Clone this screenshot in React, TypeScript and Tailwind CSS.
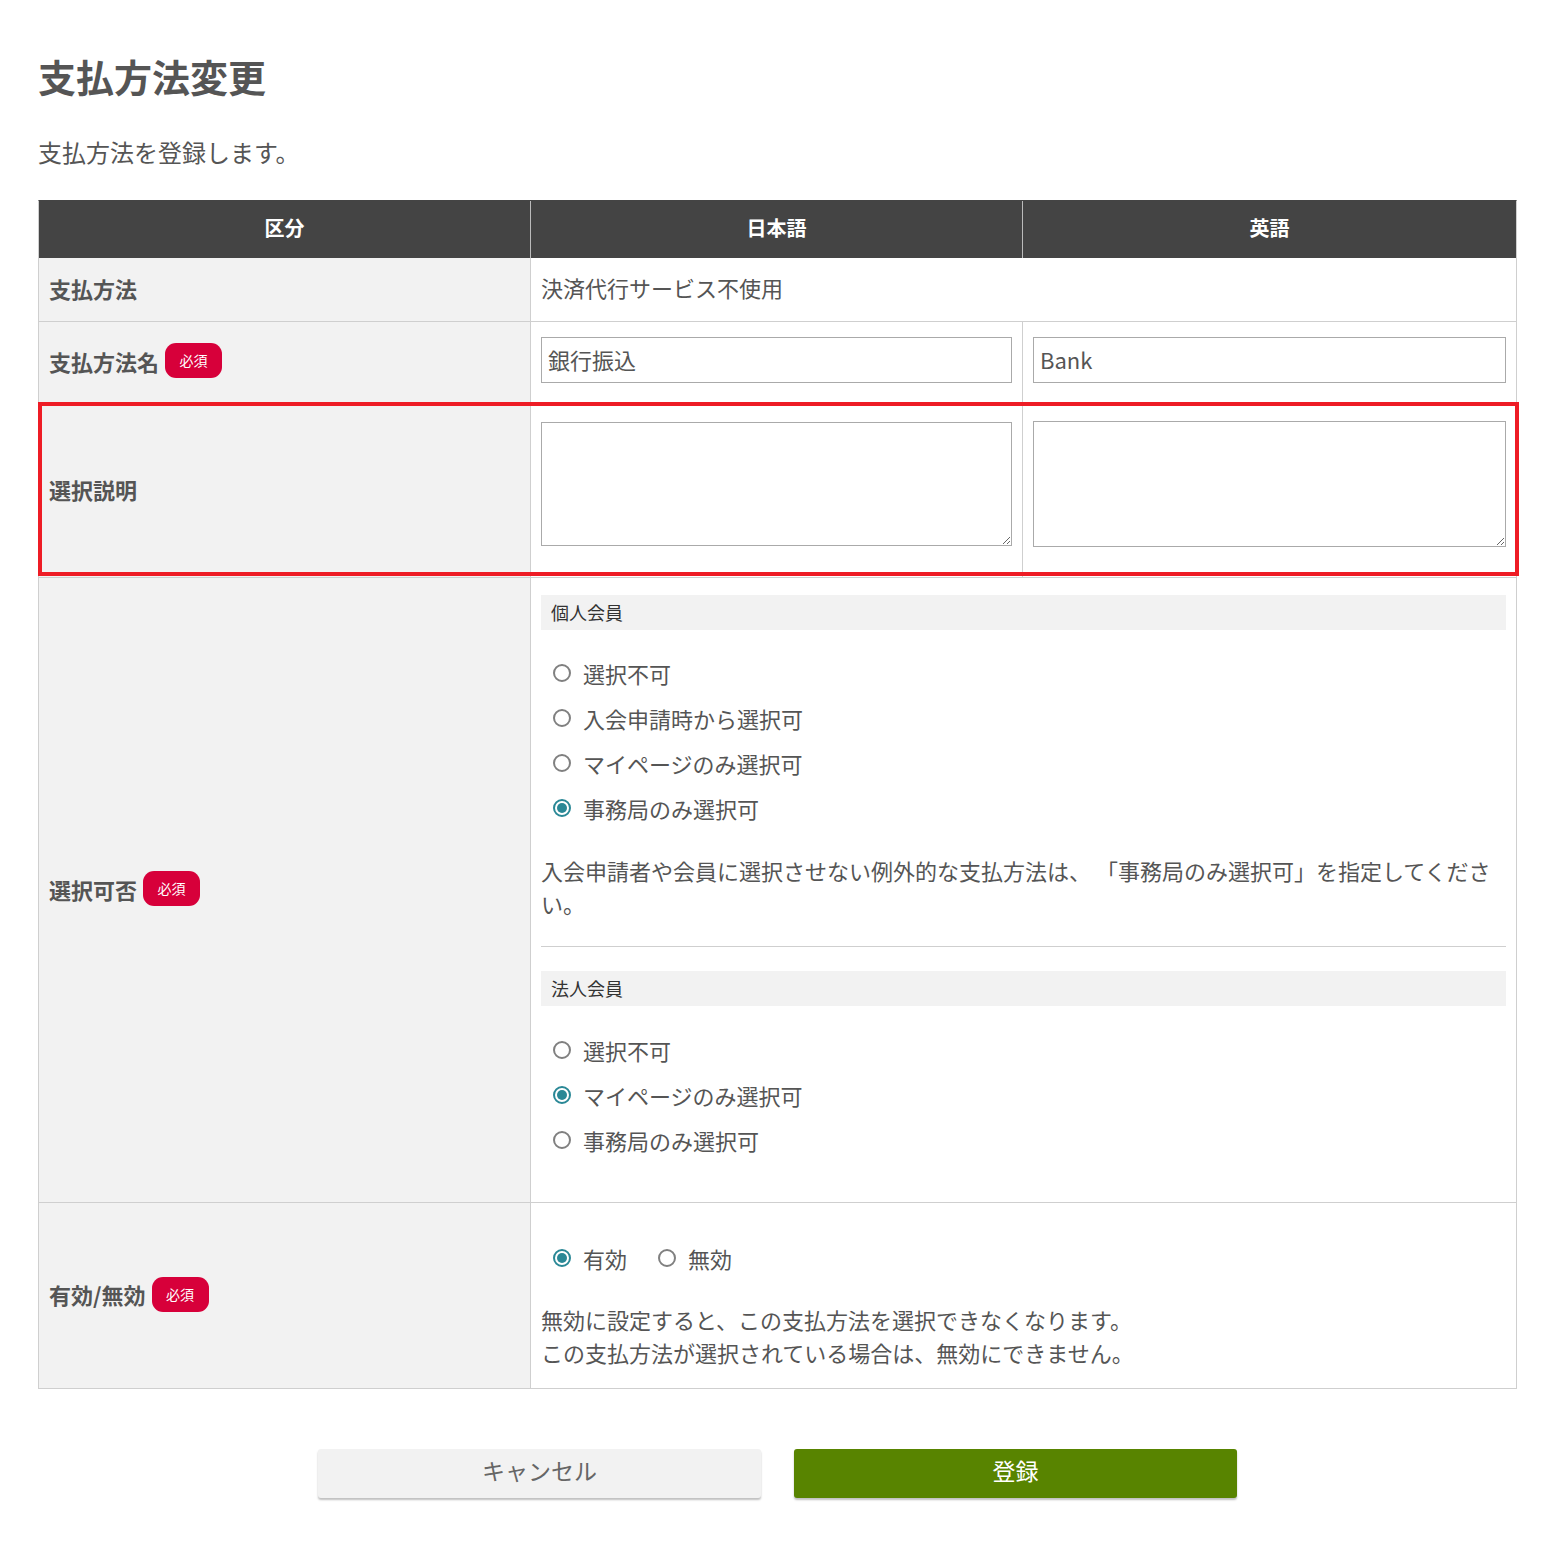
import React from "react";

const FONT = { fontFamily: '"Noto Sans CJK JP", "Noto Sans", sans-serif' };

function Radio({ checked, label }: { checked?: boolean; label: string }) {
  return (
    <label className="flex items-center h-[45px] pl-[12px] text-[22px] text-[#555]">
      {checked ? (
        <span className="w-[18px] h-[18px] rounded-full border-[2px] border-[#2a8896] bg-white flex items-center justify-center shrink-0">
          <span className="w-[10px] h-[10px] rounded-full bg-[#2a8896]" />
        </span>
      ) : (
        <span className="w-[18px] h-[18px] rounded-full border-[2px] border-[#808080] bg-white shrink-0" />
      )}
      <span className="ml-[12px] leading-none">{label}</span>
    </label>
  );
}

function Badge() {
  return (
    <span className="ml-[6px] inline-flex items-center justify-center w-[57px] h-[35px] rounded-[11px] bg-[#d7003a] text-white text-[14px] font-normal">
      必須
    </span>
  );
}

function Label({ text, required }: { text: string; required?: boolean }) {
  return (
    <div className="w-[492px] shrink-0 bg-[#f2f2f2] border-r border-[#cfcfcf] flex items-center pl-[10px] pb-[3px]">
      <span className="text-[22px] leading-[30px] font-bold text-[#555]">{text}</span>
      {required && <Badge />}
    </div>
  );
}

function SubHeader({ text }: { text: string }) {
  return (
    <div className="h-[35px] bg-[#f2f2f2] flex items-center pl-[10px] text-[18px] text-[#333]">
      {text}
    </div>
  );
}

export default function App() {
  return (
    <div className="bg-white min-h-[1544px] text-[#555]" style={FONT}>
      <div className="pl-[38px] pt-[47px] pb-[46px] w-[1517px]">
        <h1 className="text-[38px] font-bold leading-[57px] text-[#555]">支払方法変更</h1>
        <p className="mt-[30px] text-[24px] leading-[36px] text-[#555]">支払方法を登録します。</p>

        <div className="mt-[30px] w-[1479px] border border-[#cfcfcf] border-t-[#444]">
          {/* header */}
          <div className="flex h-[57px] bg-[#444] text-white text-[20px] font-bold leading-none">
            <div className="w-[492px] border-r border-[#bbb] flex items-center justify-center pb-[3px]">区分</div>
            <div className="w-[492px] border-r border-[#bbb] flex items-center justify-center pb-[3px]">日本語</div>
            <div className="flex-1 flex items-center justify-center pb-[3px]">英語</div>
          </div>

          {/* row 1 */}
          <div className="flex h-[64px] border-b border-[#cfcfcf]">
            <Label text="支払方法" />
            <div className="flex-1 flex items-center pl-[10px] pb-[4px] text-[22px] text-[#555]">
              決済代行サービス不使用
            </div>
          </div>

          {/* row 2 */}
          <div className="flex border-b border-[#cfcfcf]">
            <Label text="支払方法名" required />
            <div className="w-[492px] border-r border-[#cfcfcf] px-[10px] pt-[15px] pb-[19px]">
              <input
                defaultValue="銀行振込"
                className="block w-full h-[46px] border border-[#aaa] px-[6px] pb-[3px] text-[22px] text-[#555] outline-none"
                style={FONT}
              />
            </div>
            <div className="flex-1 px-[10px] pt-[15px] pb-[19px]">
              <input
                defaultValue="Bank"
                className="block w-full h-[46px] border border-[#aaa] px-[6px] pb-[3px] text-[22px] text-[#555] outline-none"
                style={FONT}
              />
            </div>
          </div>

          {/* row 3 highlighted */}
          <div className="relative flex border-b border-[#cfcfcf]">
            <Label text="選択説明" />
            <div className="w-[492px] border-r border-[#cfcfcf] px-[10px] pt-[19px] pb-[31px]">
              <textarea className="block w-full h-[124px] border border-[#aaa] outline-none" />
            </div>
            <div className="flex-1 px-[10px] pt-[18px] pb-[30px]">
              <textarea className="block w-full h-[126px] border border-[#aaa] outline-none" />
            </div>
            <div className="pointer-events-none absolute top-[-1px] bottom-[1px] left-[-1px] right-[-3px] border-[4px] border-[#ee1c25]" />
          </div>

          {/* row 4 */}
          <div className="flex border-b border-[#cfcfcf]">
            <Label text="選択可否" required />
            <div className="flex-1 px-[10px] pt-[17px] pb-[40px]">
              <SubHeader text="個人会員" />
              <div className="mt-[20px]">
                <Radio label="選択不可" />
                <Radio label="入会申請時から選択可" />
                <Radio label="マイページのみ選択可" />
                <Radio checked label="事務局のみ選択可" />
              </div>
              <p className="mt-[24px] text-[22px] leading-[33px] text-[#555]">
                入会申請者や会員に選択させない例外的な支払方法は、&nbsp;「事務局のみ選択可」を指定してください。
              </p>
              <div className="mt-[26px] border-t border-[#cfcfcf]" />
              <div className="mt-[24px]">
                <SubHeader text="法人会員" />
              </div>
              <div className="mt-[21px]">
                <Radio label="選択不可" />
                <Radio checked label="マイページのみ選択可" />
                <Radio label="事務局のみ選択可" />
              </div>
            </div>
          </div>

          {/* row 5 */}
          <div className="flex">
            <Label text="有効/無効" required />
            <div className="flex-1 px-[10px] pt-[16px] pb-[19px]">
              <div className="mt-[16px] flex gap-[19px]">
                <Radio checked label="有効" />
                <Radio label="無効" />
              </div>
              <p className="mt-[23px] text-[22px] leading-[33px] text-[#555]">
                無効に設定すると、この支払方法を選択できなくなります。
                <br />
                この支払方法が選択されている場合は、無効にできません。
              </p>
            </div>
          </div>
        </div>

        <div className="mt-[60px] w-[1479px] flex justify-center gap-[33px]">
          <button
            className="w-[443px] h-[49px] pb-[6px] rounded-[3px] bg-[#f2f2f2] text-[#666] text-[23px] shadow-[0_2px_2px_rgba(0,0,0,0.25)]"
            style={FONT}
          >
            キャンセル
          </button>
          <button
            className="w-[443px] h-[49px] pb-[6px] rounded-[3px] bg-[#588400] text-white text-[23px] shadow-[0_2px_2px_rgba(0,0,0,0.25)]"
            style={FONT}
          >
            登録
          </button>
        </div>
      </div>
    </div>
  );
}
